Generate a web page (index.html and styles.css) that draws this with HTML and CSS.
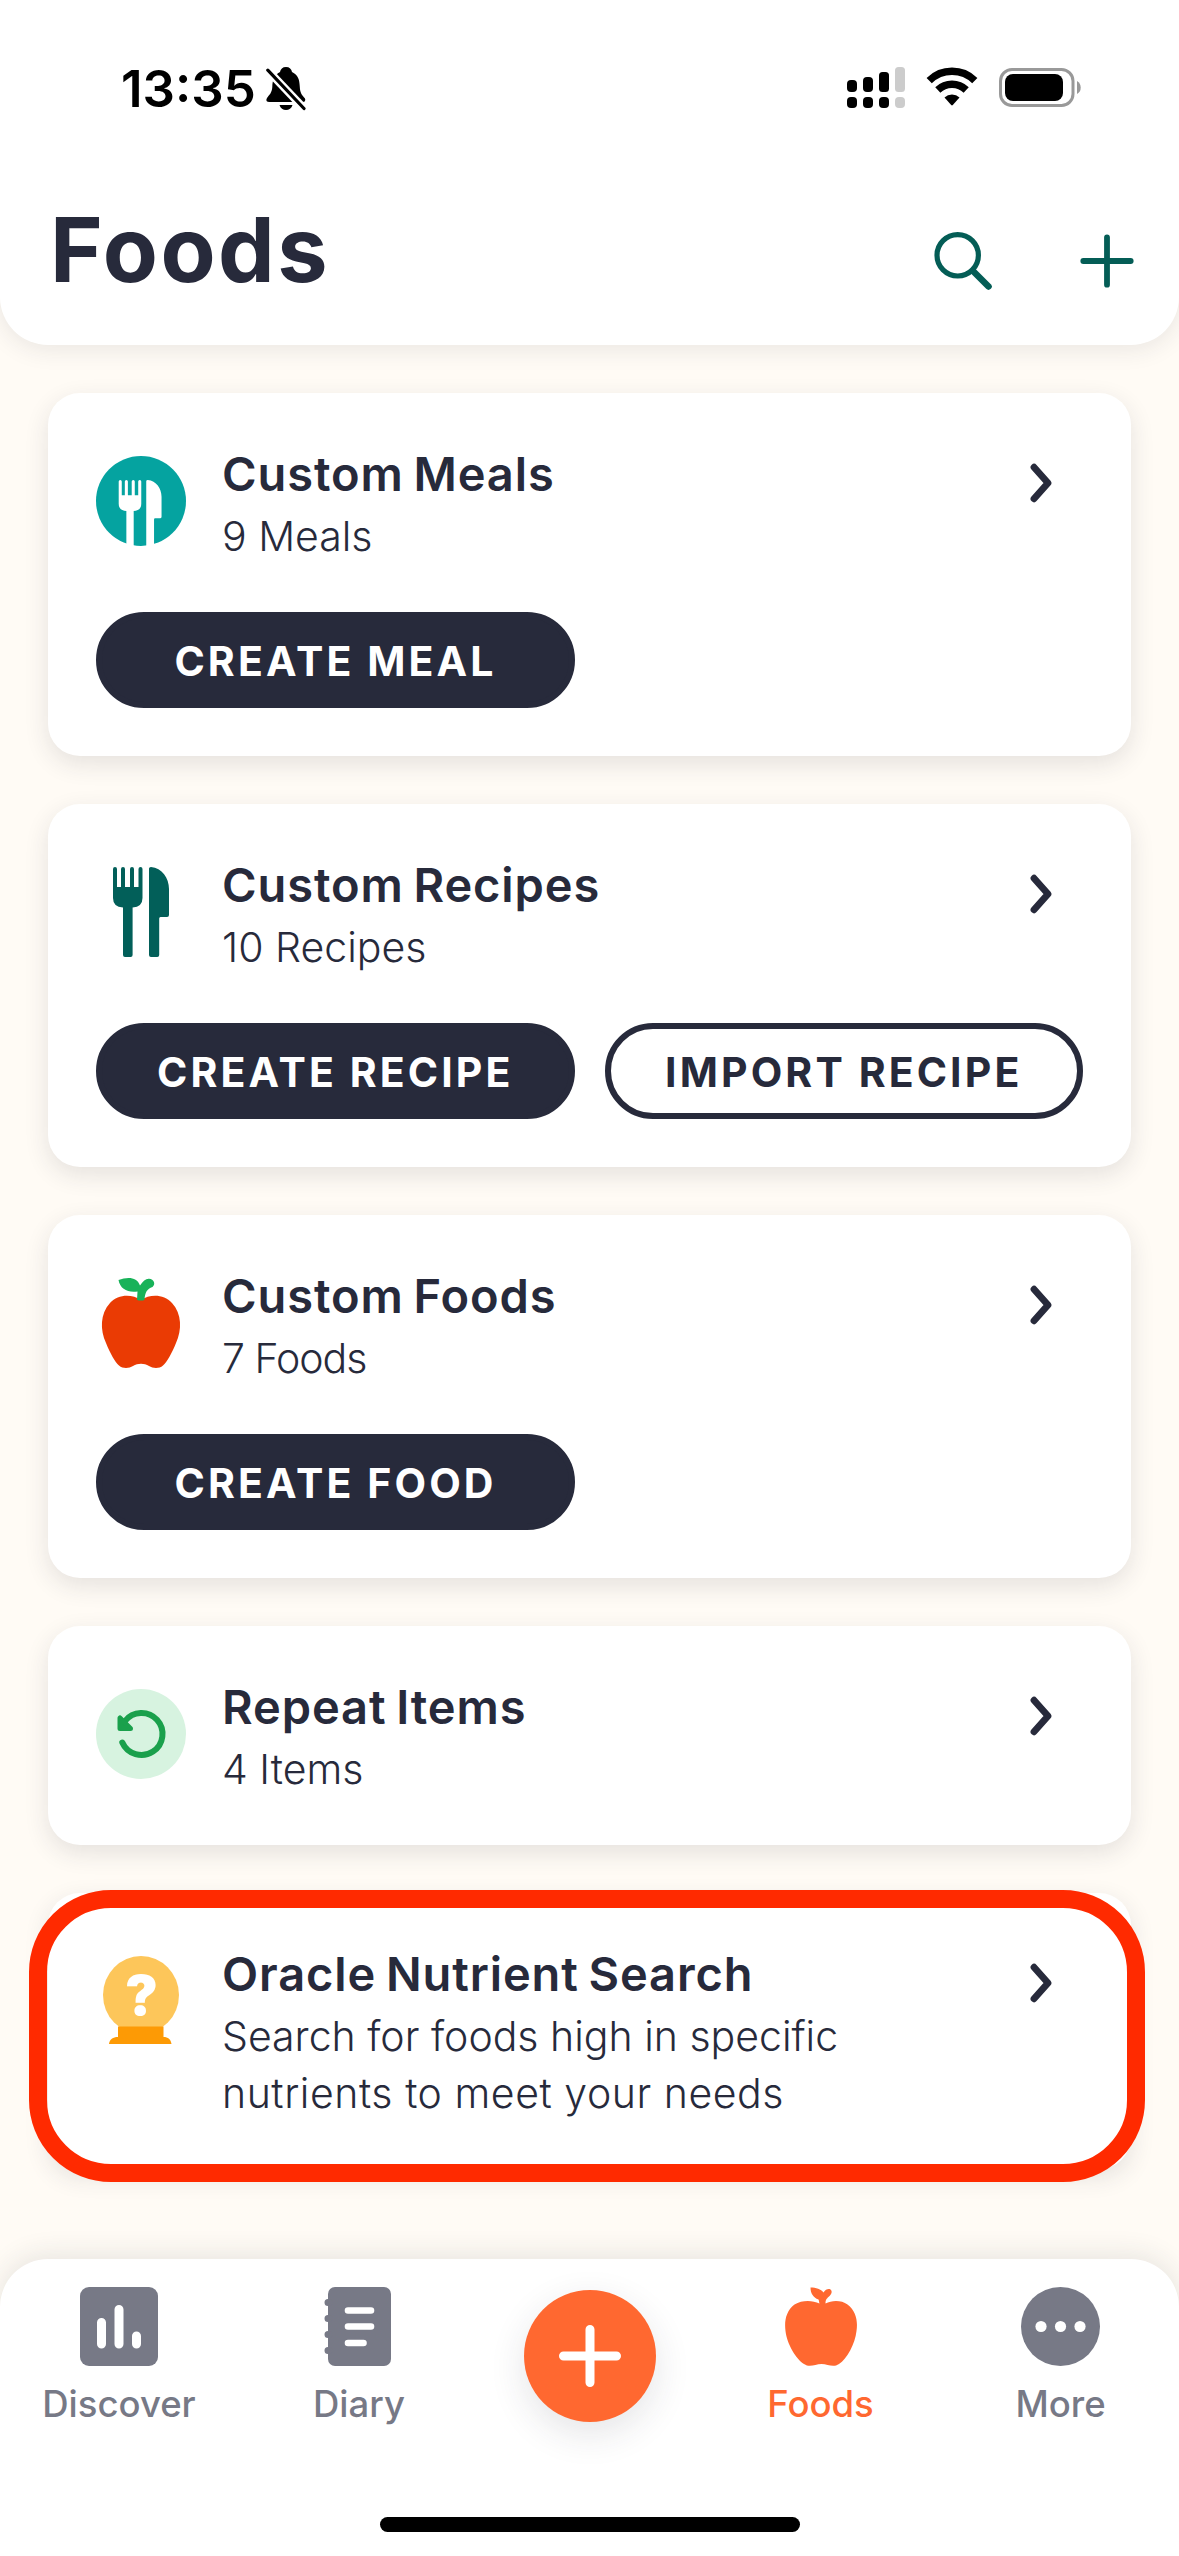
FILE: index.html
```html
<!DOCTYPE html>
<html lang="en">
<head>
<meta charset="utf-8">
<title>Foods</title>
<link rel="stylesheet" href="styles.css">
</head>
<body>
<svg class="defs" width="0" height="0" aria-hidden="true">
  <symbol id="cutlery" viewBox="0 0 90 90">
    <path d="M17 2a2 2 0 0 1 4 0V20H25V2a2 2 0 0 1 4 0V20H34V2a2 2 0 0 1 4 0V20H42.500V2a2 2 0 0 1 4 0V31Q46.500 40 36.600 40.500V88Q36.600 90 34.600 90H29Q27 90 27 88V40.500Q17 40 17 31Z"/>
    <path d="M53 1.500Q53 0 55 0C66 1 73 11 73 22V48Q73 50 71 50H64.500Q63.200 50 63.200 51.500V88Q63.200 90 61.200 90H55Q53 90 53 88Z"/>
  </symbol>
  <symbol id="chevron" viewBox="0 0 30 44">
    <path d="M7 6.200 21 22 7 37.800" fill="none" stroke="currentColor" stroke-width="6.800" stroke-linecap="round" stroke-linejoin="round"/>
  </symbol>
</svg>

<header class="header">
  <div class="status">
    <div class="status-left">
      <span class="time">13:35</span>
      <svg class="bell" width="40" height="44" viewBox="0 0 40 44">
        <path d="M20 0C16.500 0 14.500 2 14 5 8 8 6.500 13 6.300 20 6 26 3 28 1 31Q-1 35 3 35H37Q40 35 39 31.500C36 28 34 26 33.800 20 33.500 12 32 8 26 5 25.500 2 23.500 0 20 0Z"/>
        <path d="M13.500 38H26.500C25.500 41.500 23 43 20 43S14.500 41.500 13.500 38Z"/>
        <path d="M1.500 3 38.500 42" stroke="#fff" stroke-width="8"/>
        <path d="M1.800 3.200 38 41.500" stroke="#000" stroke-width="3.200" stroke-linecap="round"/>
      </svg>
    </div>
    <div class="status-right">
      <svg width="58" height="42" viewBox="0 0 58 42">
        <g fill="#000"><rect x="0" y="13" width="10" height="12" rx="4"/><rect x="0" y="30" width="10" height="11" rx="4"/><rect x="16" y="10" width="10" height="15" rx="4"/><rect x="16" y="30" width="10" height="11" rx="4"/><rect x="32" y="5" width="10" height="20" rx="3.500"/><rect x="32" y="30" width="10" height="11" rx="4"/></g>
        <g fill="#ccc"><rect x="48" y="0" width="10" height="25" rx="3.500"/><rect x="48" y="30" width="10" height="11" rx="4"/></g>
      </svg>
      <svg width="52" height="40" viewBox="0 -2 52 40">
        <g fill="none" stroke="#000" stroke-width="7.400">
          <path d="M3.200 11.600A32.500 32.500 0 0 1 48.800 11.600"/>
          <path d="M11.800 21A20.500 20.500 0 0 1 40.200 21"/>
        </g>
        <path d="M18.500 28.500A11 11 0 0 1 33.500 28.500L26.800 36Q26 36.800 25.200 36Z"/>
      </svg>
      <svg width="82" height="41" viewBox="0 -1 82 41">
        <rect x="1.500" y="1.500" width="72.500" height="36" rx="11.500" fill="none" stroke="#999" stroke-width="3"/>
        <rect x="6" y="6" width="58" height="27" rx="8"/>
        <path d="M78 13Q81.700 15 81.700 19.500T78 26Z" fill="#999"/>
      </svg>
    </div>
  </div>
  <div class="titlebar">
    <h1>Foods</h1>
    <div class="actions">
      <svg width="60" height="60" viewBox="0 0 60 60" fill="none" stroke="#045d56" stroke-linecap="round"><circle cx="24.700" cy="24.300" r="20.700" stroke-width="5.200"/><path d="M40 40 55.500 55.500" stroke-width="6.500"/></svg>
      <svg width="54" height="54" viewBox="0 0 54 54" stroke="#045d56" stroke-width="5.800" stroke-linecap="round"><path d="M27 3.300V50.700M3.300 27H50.700"/></svg>
    </div>
  </div>
</header>

<main class="cards">
  <section class="card">
    <div class="head">
      <svg class="icon" viewBox="0 0 90 90"><circle cx="45" cy="45" r="45" fill="#05a3a0"/><g transform="translate(9.700 24) scale(.765)"><use href="#cutlery" width="90" height="90" fill="#fff"/></g></svg>
      <div class="text"><h2>Custom Meals</h2><p>9 Meals</p></div>
      <svg class="chev"><use href="#chevron"/></svg>
    </div>
    <div class="buttons"><button class="btn">CREATE MEAL</button></div>
  </section>

  <section class="card">
    <div class="head">
      <svg class="icon" viewBox="0 0 90 90"><use href="#cutlery" width="90" height="90" fill="#025f59"/></svg>
      <div class="text"><h2>Custom Recipes</h2><p>10 Recipes</p></div>
      <svg class="chev"><use href="#chevron"/></svg>
    </div>
    <div class="buttons"><button class="btn">CREATE RECIPE</button><button class="btn outline">IMPORT RECIPE</button></div>
  </section>

  <section class="card">
    <div class="head">
      <svg class="icon" viewBox="0 0 90 90">
        <path d="M45 22C36 16 22 16 14 25 4 36 4 52 10 65 14 75 19 84 23 87.500 27 91 33 90.500 37 88 42 85 48 85 53 88 57 90.500 63 91 67 87.500 71 84 76 75 80 65 86 52 86 36 76 25 68 16 54 16 45 22Z" fill="#ea3b04"/>
        <path d="M41 22 41.500 13.500C32 15 24 11 22.500 2 32-1.500 41-1 44 7.500 47 3 50 .5 53 .8 58 1.200 60 6 56.500 9 51 11 49 14 48.500 22Q45 23 41 22Z" fill="#18b259"/>
      </svg>
      <div class="text"><h2>Custom Foods</h2><p class="tight">7 Foods</p></div>
      <svg class="chev"><use href="#chevron"/></svg>
    </div>
    <div class="buttons"><button class="btn">CREATE FOOD</button></div>
  </section>

  <section class="card">
    <div class="head">
      <svg class="icon" viewBox="0 0 90 90">
        <circle cx="45" cy="45" r="45" fill="#d7f3e0"/>
        <path d="M29 32A21 21 0 1 1 26.300 53.500" fill="none" stroke="#1aa04c" stroke-width="6" stroke-linecap="round"/>
        <path d="M24 29V39.500H34.500Z" fill="#1aa04c" stroke="#1aa04c" stroke-width="5" stroke-linejoin="round"/>
      </svg>
      <div class="text"><h2>Repeat Items</h2><p>4 Items</p></div>
      <svg class="chev"><use href="#chevron"/></svg>
    </div>
  </section>

  <section class="card highlighted">
    <div class="head">
      <svg class="icon" viewBox="0 0 90 90">
        <ellipse cx="45" cy="39" rx="38" ry="39" fill="#fdc65a"/>
        <path d="M22 70.500H67.500V81C72 81 75 83.500 75.500 88H13C13.500 83.500 17 81 22 81Z" fill="#fd9a05"/>
        <text class="mark" x="45.500" y="58.500" text-anchor="middle">?</text>
      </svg>
      <div class="text"><h2>Oracle Nutrient Search</h2><p>Search for foods high in specific<br><span class="loose">nutrients to meet your needs</span></p></div>
      <svg class="chev"><use href="#chevron"/></svg>
    </div>
  </section>
</main>

<nav class="tabs">
  <a class="tab"><svg width="78" height="79" viewBox="0 0 78 79"><rect width="78" height="79" rx="9"/><path d="M21.500 35.500V57M39 22.500V57M56.500 49V57" stroke="#fff" stroke-width="9" stroke-linecap="round"/></svg><span>Discover</span></a>
  <a class="tab"><svg width="73" height="79" viewBox="0 0 73 79"><rect x="5" width="63" height="79" rx="7"/><path d="M5 15.500H6M5 31.500H6M5 47.500H6M5 63.500H6" stroke="currentColor" stroke-width="7" stroke-linecap="round"/><path d="M25 23.500H48M25 39.500H48M25 56H40.500" stroke="#fff" stroke-width="6.600" stroke-linecap="round"/></svg><span>Diary</span></a>
  <a class="fab"><svg width="64" height="64" viewBox="0 0 64 64" stroke="#fff" stroke-width="9" stroke-linecap="round"><path d="M32 5.500V58.500M5.500 32H58.500"/></svg></a>
  <a class="tab active"><svg width="72" height="79" viewBox="0 0 72 79"><path d="M34.500 16.500C34 15 34 13.500 33.500 12.500 28 10.500 25.500 6 25.500.5 31 .5 36 2 38.500 5.500 41 1.500 45.500 1 46.500 4 47.500 7 43 10 41.500 12 40.500 13.500 40.500 15 40.500 16.500 47 13 56.500 13 62.500 17.500 71 24 73 34 71.500 44 70 57 62 72 54 77 48 81 43 77 36.500 77S25 81 19 77C11 72 2 57 .5 44-.8 34 1 24 9.500 17.500 17 13 27 13 34.500 16.500Z"/></svg><span>Foods</span></a>
  <a class="tab"><svg width="79" height="79" viewBox="0 0 79 79"><circle cx="39.500" cy="39.500" r="39.500"/><g fill="#fff"><circle cx="20" cy="39.500" r="5.600"/><circle cx="39.500" cy="39.500" r="5.600"/><circle cx="59" cy="39.500" r="5.600"/></g></svg><span>More</span></a>
  <div class="home"></div>
</nav>
</body>
</html>
```
FILE: styles.css
```css
* { box-sizing: border-box; }
body {
  margin: 0;
  width: 1179px;
  height: 2556px;
  display: flex;
  flex-direction: column;
  background: #fffbf5;
  color: #272a3b;
  font-family: Inter, "Liberation Sans", sans-serif;
  overflow: hidden;
}
h1, h2, p { margin: 0; }
svg { display: block; flex: none; }
.defs { position: absolute; }

.header {
  height: 345px;
  background: #fff;
  border-radius: 0 0 48px 48px;
  box-shadow: 0 4px 24px rgba(39, 42, 59, .1);
}
.status {
  display: flex;
  justify-content: space-between;
  height: 178px;
  padding: 67px 98px 0 121px;
  color: #000;
}
.status-left, .status-right { display: flex; align-items: flex-start; }
.time { font-size: 51px; font-weight: 600; line-height: 43px; width: 145px; white-space: nowrap; }
.status-right { gap: 21px; }
.titlebar {
  display: flex;
  justify-content: space-between;
  padding: 0 45px 0 50px;
}
h1 { font-size: 90px; font-weight: 700; line-height: 143px; letter-spacing: 2.5px; }
.actions { display: flex; align-items: center; gap: 87px; height: 166px; }

.cards {
  display: flex;
  flex-direction: column;
  gap: 48px;
  padding: 48px 48px 90px;
}
.card {
  position: relative;
  padding: 48px;
  background: #fff;
  border-radius: 32px;
  box-shadow: 0 8px 24px rgba(39, 42, 59, .12);
}
.head { display: flex; min-height: 123px; }
.icon { width: 90px; height: 90px; margin: 15px 36px 0 0; overflow: visible; }
.text { flex: 1; padding-top: 3px; white-space: nowrap; }
h2 {
  font-size: 47px;
  font-weight: 600;
  line-height: 60px;
  letter-spacing: .9px;
  word-spacing: -3px;
}
p { margin: 4px 0 -1px; font-size: 41px; font-weight: 300; line-height: 57px; }
.tight { letter-spacing: -1px; }
.loose { letter-spacing: .55px; }
.chev { width: 30px; height: 44px; margin: 20px 26px 0 0; }
.buttons { display: flex; gap: 30px; margin-top: 48px; }
.btn {
  width: 479px;
  height: 96px;
  padding: 2px 0 0;
  border: 6px solid #272a3b;
  border-radius: 48px;
  background: #272a3b;
  color: #fff;
  font: 700 41px/82px Inter, "Liberation Sans", sans-serif;
  letter-spacing: 3.1px;
  white-space: nowrap;
}
.btn.outline { background: #fff; color: #272a3b; }
.mark { font: 900 55px Inter, sans-serif; fill: #fff; }
.highlighted::after {
  content: "";
  position: absolute;
  inset: -3px -14px -13px -19px;
  border: 18px solid #ff2a00;
  border-radius: 82px;
}

.tabs {
  position: relative;
  flex: 1;
  display: grid;
  grid-template-columns: 238px 242px 219px 243px 237px;
  padding-top: 28px;
  background: #fff;
  border-radius: 48px 48px 0 0;
  box-shadow: 0 -4px 28px rgba(39, 42, 59, .11);
}
.tab {
  display: flex;
  flex-direction: column;
  align-items: center;
  gap: 13px;
  color: #777986;
  font-size: 36.5px;
  font-weight: 500;
  line-height: 50px;
}
.tab svg { fill: currentColor; }
.tab.active { color: #ff6830; }
.fab {
  display: flex;
  align-items: center;
  justify-content: center;
  width: 132px;
  height: 132px;
  margin: 3px auto 0;
  border-radius: 50%;
  background: #ff6830;
  box-shadow: 0 12px 36px rgba(39, 42, 59, .12);
}
.home {
  position: absolute;
  left: 380px;
  bottom: 24px;
  width: 420px;
  height: 15px;
  border-radius: 8px;
  background: #000;
}
```
